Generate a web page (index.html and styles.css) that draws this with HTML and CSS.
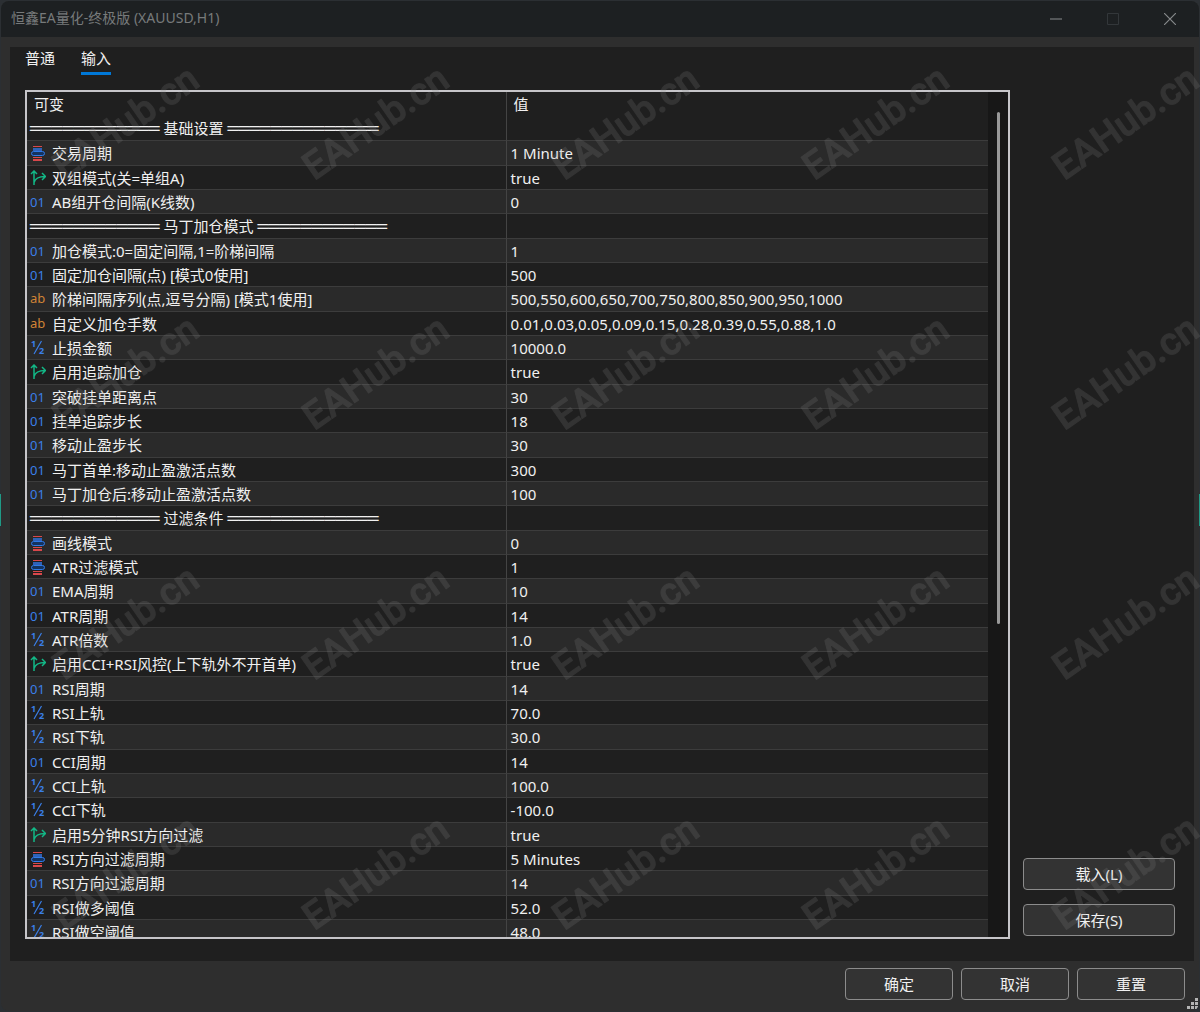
FILE: index.html
```
<!DOCTYPE html>
<html lang="zh-CN">
<head>
    <meta charset="UTF-8">
    <meta name="viewport" content="width=device-width, initial-scale=1.0">
    <title>恒鑫EA量化-终极版 (XAUUSD,H1)</title>
    <link rel="stylesheet" href="styles.css">
</head>
<body>
    <!-- row icons -->
    <svg class="sprite" aria-hidden="true">
        <symbol id="enum" viewBox="0 0 16 16">
            <path d="M3 1h9v1H3zM3 12h9v1H3zM3 14h9v2H3z" fill="#d8474b"/>
            <path d="M3 3h9v3H3z" fill="#2f62b8"/>
            <rect x="1.500" y="6.500" width="13" height="4" rx="2" fill="#14335f" stroke="#2f7be8"/>
        </symbol>
        <symbol id="bool" viewBox="0 0 16 16">
            <path d="M4 15V1M1 4l3-3 3 3M4 12.500C5 9 9 6.500 15 6.500M12 3l3.500 3.500L12 10" fill="none" stroke="#12b886" stroke-width="1.500"/>
        </symbol>
        <symbol id="int" viewBox="0 0 16 16">
            <text x="0" y="13" class="glyph-int">01</text>
        </symbol>
        <symbol id="str" viewBox="0 0 16 16">
            <text x="0" y="12" class="glyph-str">ab</text>
        </symbol>
        <symbol id="dbl" viewBox="0 0 16 16">
            <text x="1" y="7" class="glyph-dbl">1</text>
            <text x="9" y="14" class="glyph-dbl">2</text>
            <path d="M11.500 1L4 14" stroke="#3a7fe8" stroke-width="1.200"/>
        </symbol>
    </svg>

    <div class="window">
        <header class="titlebar">
            <h1>恒鑫EA量化-终极版 (XAUUSD,H1)</h1>
            <div class="controls">
                <button type="button" aria-label="最小化"><svg viewBox="0 0 12 12"><path d="M0 6h12" stroke="#66696b" stroke-width="1.500"/></svg></button>
                <button type="button" aria-label="最大化" disabled><svg viewBox="0 0 12 12"><path d="M.5.500h11v11H.5z" fill="none" stroke="#33373a"/></svg></button>
                <button type="button" aria-label="关闭"><svg viewBox="0 0 12 12"><path d="M0 0l12 12M12 0L0 12" stroke="#85888a" stroke-width="1.200"/></svg></button>
            </div>
        </header>

        <main class="panel">
            <nav class="tabs">
                <button type="button">普通</button>
                <button type="button" class="active">输入</button>
            </nav>
            <div class="content">
                <div class="grid">
                    <div class="rows">
                        <table>
                            <thead>
                                <tr><th>可变</th><th>值</th></tr>
                            </thead>
                            <tbody>
                                <tr class="section"><td><span class="rule">════════════</span> 基础设置 <span class="rule">══════════════</span></td><td></td></tr>
                                <tr><td><svg><use href="#enum"/></svg>交易周期</td><td>1 Minute</td></tr>
                                <tr><td><svg><use href="#bool"/></svg>双组模式(关=单组A)</td><td>true</td></tr>
                                <tr><td><svg><use href="#int"/></svg>AB组开仓间隔(K线数)</td><td>0</td></tr>
                                <tr class="section"><td><span class="rule">════════════</span> 马丁加仓模式 <span class="rule">════════════</span></td><td></td></tr>
                                <tr><td><svg><use href="#int"/></svg>加仓模式:0=固定间隔,1=阶梯间隔</td><td>1</td></tr>
                                <tr><td><svg><use href="#int"/></svg>固定加仓间隔(点) [模式0使用]</td><td>500</td></tr>
                                <tr><td><svg><use href="#str"/></svg>阶梯间隔序列(点,逗号分隔) [模式1使用]</td><td>500,550,600,650,700,750,800,850,900,950,1000</td></tr>
                                <tr><td><svg><use href="#str"/></svg>自定义加仓手数</td><td>0.01,0.03,0.05,0.09,0.15,0.28,0.39,0.55,0.88,1.0</td></tr>
                                <tr><td><svg><use href="#dbl"/></svg>止损金额</td><td>10000.0</td></tr>
                                <tr><td><svg><use href="#bool"/></svg>启用追踪加仓</td><td>true</td></tr>
                                <tr><td><svg><use href="#int"/></svg>突破挂单距离点</td><td>30</td></tr>
                                <tr><td><svg><use href="#int"/></svg>挂单追踪步长</td><td>18</td></tr>
                                <tr><td><svg><use href="#int"/></svg>移动止盈步长</td><td>30</td></tr>
                                <tr><td><svg><use href="#int"/></svg>马丁首单:移动止盈激活点数</td><td>300</td></tr>
                                <tr><td><svg><use href="#int"/></svg>马丁加仓后:移动止盈激活点数</td><td>100</td></tr>
                                <tr class="section"><td><span class="rule">════════════</span> 过滤条件 <span class="rule">══════════════</span></td><td></td></tr>
                                <tr><td><svg><use href="#enum"/></svg>画线模式</td><td>0</td></tr>
                                <tr><td><svg><use href="#enum"/></svg>ATR过滤模式</td><td>1</td></tr>
                                <tr><td><svg><use href="#int"/></svg>EMA周期</td><td>10</td></tr>
                                <tr><td><svg><use href="#int"/></svg>ATR周期</td><td>14</td></tr>
                                <tr><td><svg><use href="#dbl"/></svg>ATR倍数</td><td>1.0</td></tr>
                                <tr><td><svg><use href="#bool"/></svg>启用CCI+RSI风控(上下轨外不开首单)</td><td>true</td></tr>
                                <tr><td><svg><use href="#int"/></svg>RSI周期</td><td>14</td></tr>
                                <tr><td><svg><use href="#dbl"/></svg>RSI上轨</td><td>70.0</td></tr>
                                <tr><td><svg><use href="#dbl"/></svg>RSI下轨</td><td>30.0</td></tr>
                                <tr><td><svg><use href="#int"/></svg>CCI周期</td><td>14</td></tr>
                                <tr><td><svg><use href="#dbl"/></svg>CCI上轨</td><td>100.0</td></tr>
                                <tr><td><svg><use href="#dbl"/></svg>CCI下轨</td><td>-100.0</td></tr>
                                <tr><td><svg><use href="#bool"/></svg>启用5分钟RSI方向过滤</td><td>true</td></tr>
                                <tr><td><svg><use href="#enum"/></svg>RSI方向过滤周期</td><td>5 Minutes</td></tr>
                                <tr><td><svg><use href="#int"/></svg>RSI方向过滤周期</td><td>14</td></tr>
                                <tr><td><svg><use href="#dbl"/></svg>RSI做多阈值</td><td>52.0</td></tr>
                                <tr><td><svg><use href="#dbl"/></svg>RSI做空阈值</td><td>48.0</td></tr>
                            </tbody>
                        </table>
                    </div>
                    <div class="scrollbar"><div class="thumb"></div></div>
                </div>
                <aside class="side">
                    <button type="button" class="btn">载入(L)</button>
                    <button type="button" class="btn">保存(S)</button>
                </aside>
            </div>
        </main>

        <footer class="footer">
            <button type="button" class="btn">确定</button>
            <button type="button" class="btn">取消</button>
            <button type="button" class="btn">重置</button>
        </footer>

        <svg class="grip" viewBox="0 0 12 12" aria-hidden="true">
            <path d="M8 0h3v3H8zM4 4h3v3H4zM8 4h3v3H8zM0 8h3v3H0zM4 8h3v3H4zM8 8h3v3H8z" fill="#b4b4b4"/>
        </svg>
    </div>

    <svg class="watermark" aria-hidden="true">
        <defs>
            <pattern id="mark" width="250" height="250" patternUnits="userSpaceOnUse">
                <text x="127" y="136" transform="rotate(-35 125 125)">EAHub.cn</text>
            </pattern>
        </defs>
        <rect width="100%" height="100%" fill="url(#mark)"/>
    </svg>
</body>
</html>
```
FILE: styles.css
```
* {
    box-sizing: border-box;
}

body {
    margin: 0;
    padding: 1px;
    height: 100vh;
    overflow: hidden;
    position: relative;
    background: linear-gradient(#2b2f33 0 494px, #1f9a86 494px 526px, #2b2f33 526px);
    color: #f0f0f0;
    font-family: "Noto Sans", "Noto Sans CJK SC", sans-serif;
    font-size: 15px;
    line-height: 20px;
}

button {
    font: inherit;
    color: inherit;
    background: none;
    border: none;
    padding: 0;
}

.sprite {
    display: none;
}

.window {
    position: relative;
    height: 100%;
    display: flex;
    flex-direction: column;
    background-color: #2e2e2e;
    border-radius: 8px;
    overflow: hidden;
}

.titlebar {
    display: flex;
    align-items: center;
    justify-content: space-between;
    height: 36px;
    padding: 0 7px 0 10px;
    background-color: #1d2022;
    color: #777a7b;
}

.titlebar h1 {
    margin: 0;
    padding-bottom: 2px;
    font-size: 14px;
    font-weight: normal;
}

.controls {
    display: flex;
    gap: 12px;
}

.controls button {
    display: flex;
    align-items: center;
    justify-content: center;
    width: 45px;
    height: 36px;
}

.controls svg {
    width: 12px;
    height: 12px;
}

.panel {
    flex: 1;
    min-height: 0;
    display: flex;
    flex-direction: column;
    margin: 10px 5px 0 9px;
    padding: 0 19px 22px 15px;
    background-color: #1f1f1f;
}

.tabs {
    display: flex;
    gap: 26px;
    height: 43px;
}

.tabs button {
    height: 28px;
    padding-bottom: 4px;
    border-bottom: 3px solid transparent;
}

.tabs .active {
    border-color: #0078d7;
}

.content {
    flex: 1;
    min-height: 0;
    display: flex;
    gap: 13px;
}

.grid {
    flex: 1;
    display: flex;
    border: 2px solid #c6c5c9;
    overflow: hidden;
}

.rows {
    flex: 1;
    overflow: hidden;
}

table {
    width: 100%;
    table-layout: fixed;
    border-collapse: separate;
    border-spacing: 0;
}

tr {
    height: 24px;
}

/* keeps the average row a bit over 24px */
tbody tr:nth-child(3n + 2) {
    height: 25px;
}

th,
td {
    height: inherit;
    padding: 0 4px 0 3px;
    line-height: 20px;
    font-weight: normal;
    text-align: left;
    white-space: nowrap;
}

th {
    padding: 0 7px;
}

th:first-child {
    width: 49.8%;
}

th + th,
td + td {
    border-left: 1px solid #444;
}

td + td {
    padding-left: 4px;
}

tbody tr + tr td {
    border-top: 1px solid #3c3c3c;
}

tbody tr:nth-child(even) {
    background-color: #2a2a2a;
}

td svg {
    width: 16px;
    height: 16px;
    margin-right: 6px;
    vertical-align: -2px;
}

.rule {
    font-family: "Liberation Mono", monospace;
    font-size: 18px;
    line-height: 16px;
}

.glyph-int,
.glyph-str {
    font-size: 13px;
    fill: #3a7fe8;
}

.glyph-str {
    fill: #d08436;
}

.glyph-dbl {
    font-size: 9px;
    font-weight: bold;
    fill: #3a7fe8;
}

.scrollbar {
    width: 20px;
    padding: 20px 8px 0 9px;
    background-color: #171717;
}

.thumb {
    height: 62%;
    border-radius: 2px;
    background-color: #999;
}

.side {
    width: 152px;
    display: flex;
    flex-direction: column;
    justify-content: flex-end;
    gap: 14px;
    padding-bottom: 3px;
}

.btn {
    height: 32px;
    border: 1px solid #8c8c8c;
    border-radius: 4px;
    background-color: #333;
}

.footer {
    display: flex;
    justify-content: flex-end;
    gap: 8px;
    padding: 7px 14px 11px;
}

.footer .btn {
    width: 108px;
}

.grip {
    position: absolute;
    right: 0;
    bottom: 1px;
    width: 12px;
    height: 12px;
}

.watermark {
    position: absolute;
    top: 0;
    left: 0;
    width: 100%;
    height: 1000px;
    pointer-events: none;
}

.watermark text {
    font-family: Roboto, sans-serif;
    font-size: 38px;
    font-weight: 500;
    text-anchor: middle;
    fill: #808080;
    stroke: #808080;
    stroke-width: 1px;
    stroke-linejoin: round;
    opacity: 0.2;
}
```
